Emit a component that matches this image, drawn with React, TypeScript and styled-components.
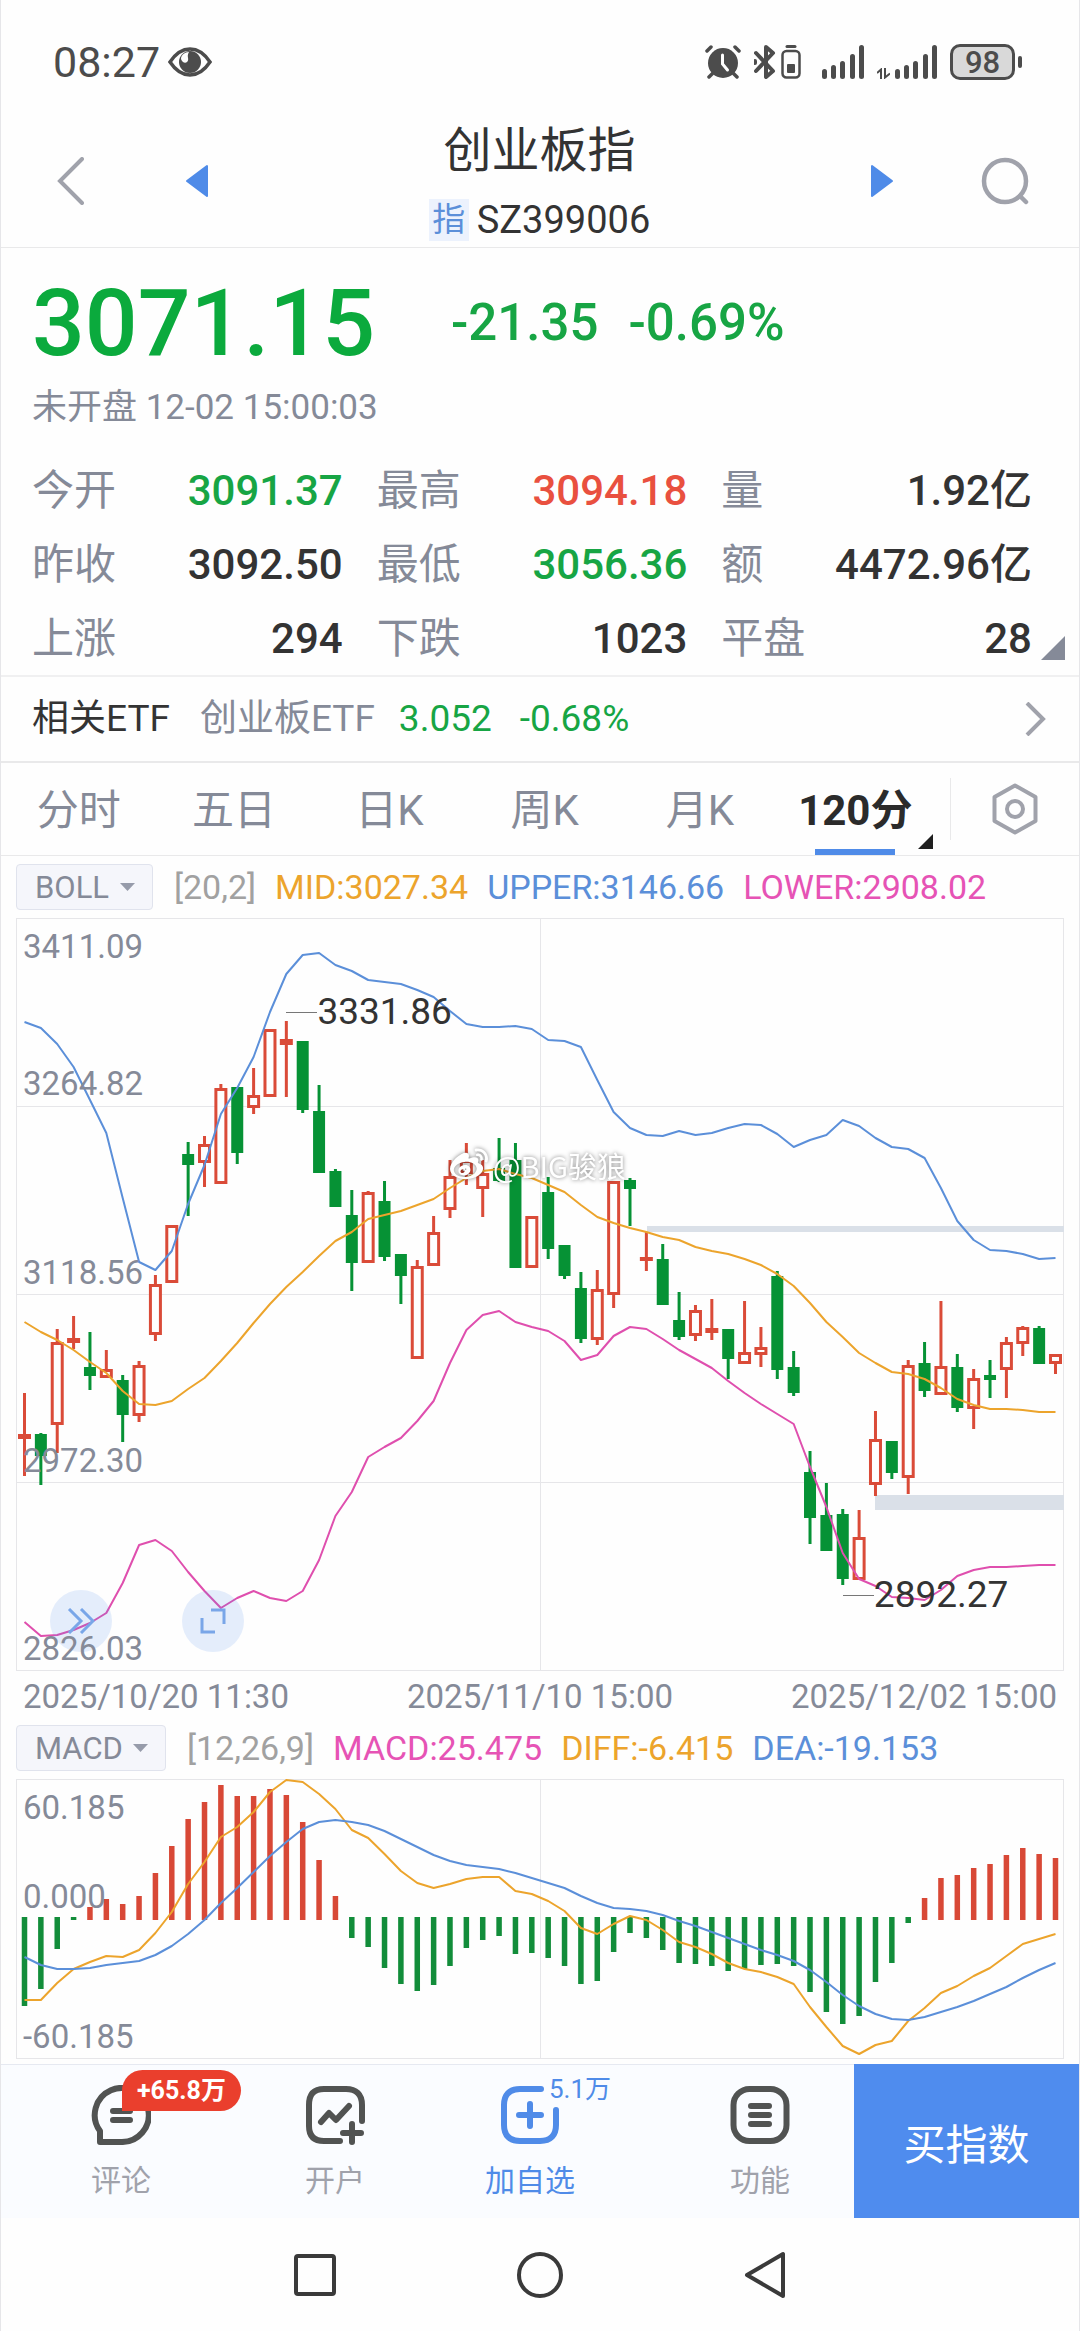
import React from "react";
import styled, { createGlobalStyle, css } from "styled-components";
import { FaWeibo } from "react-icons/fa";

const color = {
  ink: "#333333",
  muted: "#858a98",
  faint: "#a0a2ab",
  line: "#e9e9ea",
  grid: "#e6e6e9",
  blue: "#4f8be8",
  lineBlue: "#5b8fd9",
  up: "#e9503f",
  down: "#17a544",
  candleUp: "#da4b38",
  candleDown: "#069235",
  amber: "#eca42c",
  pink: "#e653b5",
};

const GlobalStyle = createGlobalStyle`
  * { box-sizing: border-box; }
  body {
    margin: 0;
    background: #fefefe;
    color: ${color.ink};
    font-family: Roboto, "Noto Sans CJK SC", sans-serif;
  }
  button, select { font: inherit; color: inherit; }
  svg { display: block; }
`;

const Screen = styled.div`
  border: 0 solid #e6e6e9;
  border-width: 0 1px;
`;

const plainButton = css`
  display: flex;
  align-items: center;
  justify-content: center;
  padding: 0;
  border: 0;
  background: none;
  white-space: nowrap;
  cursor: pointer;
`;

/* ---------- status bar ---------- */

const StatusBar = styled.div`
  display: flex;
  align-items: center;
  justify-content: space-between;
  height: 110px;
  padding: 14px 57px 0 52px;
  color: #4c4c4c;
`;

const Clock = styled.div`
  display: flex;
  align-items: center;
  gap: 8px;
  font-size: 43px;
  line-height: 50px;
`;

const StatusIcons = styled.div`
  display: flex;
  align-items: center;
  gap: 13px;
`;

const IconPair = styled.div<{ $after?: number }>`
  display: flex;
  align-items: flex-end;
  gap: 5px;
  margin-right: ${(p) => p.$after ?? 0}px;
`;

const Battery = styled.div`
  display: flex;
  align-items: center;
  gap: 3px;
  &::after {
    content: "";
    width: 4px;
    height: 12px;
    border-radius: 2px;
    background: #4c4c4c;
  }
`;

const BatteryLevel = styled.span`
  width: 65px;
  height: 36px;
  border: 3px solid #4c4c4c;
  border-radius: 10px;
  background: #d9d9d9;
  font-size: 31px;
  font-weight: 500;
  line-height: 31px;
  text-align: center;
`;

/* ---------- title bar ---------- */

const TitleBar = styled.header`
  display: flex;
  align-items: center;
  height: 138px;
  padding: 4px 50px 0 56px;
  border-bottom: 1px solid ${color.line};
`;

const IconButton = styled.button<{ $color: string }>`
  ${plainButton}
  color: ${(p) => p.$color};
`;

const SideControls = styled.div<{ $gap: number }>`
  display: flex;
  align-items: center;
  gap: ${(p) => p.$gap}px;
`;

const TitleBlock = styled.div`
  flex: 1;
  display: flex;
  flex-direction: column;
  align-items: center;
  gap: 17px;
`;

const Title = styled.h1`
  margin: 0;
  font-size: 48px;
  font-weight: 400;
  line-height: 62px;
`;

const Code = styled.div`
  display: flex;
  align-items: center;
  gap: 8px;
  font-size: 38px;
  line-height: 42px;
`;

const Tag = styled.span`
  width: 40px;
  background: #ecf2fd;
  color: ${color.lineBlue};
  font-size: 33px;
  text-align: center;
`;

/* ---------- quote ---------- */

const Quote = styled.section`
  position: relative;
  padding: 21px 47px 0 31px;
  border-bottom: 2px solid #f0f0f1;
`;

const PriceRow = styled.div`
  display: flex;
  align-items: center;
  color: ${color.down};
  font-weight: 500;
`;

const Price = styled.strong`
  font-size: 93px;
  font-weight: 500;
  line-height: 110px;
  color: #0baa3d;
`;

const Change = styled.span`
  display: flex;
  gap: 30px;
  margin-left: 76px;
  padding-bottom: 4px;
  font-size: 51px;
`;

const Stamp = styled.p`
  margin: 7px 0 23px;
  color: ${color.muted};
  font-size: 35px;
  line-height: 44px;
`;

const Stats = styled.dl`
  display: grid;
  grid-template-columns: repeat(3, 1fr);
  column-gap: 34px;
  margin: 0;
`;

const Stat = styled.div`
  display: flex;
  justify-content: space-between;
  height: 74px;
  font-size: 42px;
  line-height: 76px;
`;

const StatName = styled.dt`
  color: ${color.muted};
`;

const StatValue = styled.dd<{ $color?: string }>`
  margin: 0;
  font-weight: 500;
  color: ${(p) => p.$color ?? color.ink};
`;

const Corner = styled.span<{ $size: number; $color: string; $right: number; $bottom: number }>`
  position: absolute;
  right: ${(p) => p.$right}px;
  bottom: ${(p) => p.$bottom}px;
  width: ${(p) => p.$size}px;
  height: ${(p) => p.$size}px;
  background: ${(p) => p.$color};
  clip-path: polygon(100% 0, 100% 100%, 0 100%);
`;

/* ---------- related fund ---------- */

const Related = styled.a`
  display: flex;
  align-items: center;
  height: 86px;
  padding: 0 33px 0 31px;
  border-bottom: 2px solid ${color.line};
  color: ${color.ink};
  font-size: 37px;
  line-height: 42px;
  text-decoration: none;
  svg { margin-left: auto; color: ${color.faint}; }
`;

const RelatedItem = styled.span<{ $color: string; $gap: number }>`
  margin-left: ${(p) => p.$gap}px;
  color: ${(p) => p.$color};
`;

/* ---------- period tabs ---------- */

const TabBar = styled.nav`
  display: flex;
  align-items: center;
  height: 93px;
  border-bottom: 1px solid ${color.line};
`;

const Tabs = styled.div`
  flex: 1;
  display: grid;
  grid-template-columns: repeat(6, 1fr);
  height: 92px;
`;

const Tab = styled.button<{ $active?: boolean }>`
  ${plainButton}
  position: relative;
  padding-bottom: 5px;
  color: ${(p) => (p.$active ? "#2b2b2b" : color.muted)};
  font-size: 42px;
  font-weight: ${(p) => (p.$active ? 700 : 400)};
  ${(p) =>
    p.$active &&
    css`
      &::after {
        content: "";
        position: absolute;
        bottom: 0;
        left: 50%;
        width: 80px;
        height: 6px;
        margin-left: -40px;
        background: ${color.blue};
      }
    `}
`;

const TabSettings = styled.button`
  ${plainButton}
  width: 129px;
  height: 62px;
  margin-left: 17px;
  border-left: 1px solid ${color.line};
  color: ${color.faint};
`;

/* ---------- indicators and charts ---------- */

const IndicatorRow = styled.div`
  display: flex;
  align-items: center;
  gap: 19px;
  height: 62px;
  padding: 0 15px;
  font-size: 34px;
  white-space: nowrap;
`;

const Picker = styled.label`
  position: relative;
  margin-right: 2px;
  color: ${color.muted};
  svg {
    position: absolute;
    top: 19px;
    right: 18px;
    pointer-events: none;
  }
`;

const PickerSelect = styled.select`
  appearance: none;
  display: block;
  height: 46px;
  padding: 0 42px 0 18px;
  border: 1px solid #e0e3ed;
  border-radius: 4px;
  background: #f5f6fb;
  font-size: 31px;
`;

const Reading = styled.span<{ $color: string }>`
  color: ${(p) => p.$color};
`;

const Chart = styled.figure`
  position: relative;
  margin: 0 15px;
`;

const Plot = styled.svg<{ $height: number }>`
  width: 100%;
  height: ${(p) => p.$height}px;
`;

const Axis = styled.div`
  position: absolute;
  inset: 0;
  display: grid;
  grid-auto-rows: 1fr;
  color: ${color.muted};
  font-size: 33px;
  line-height: 38px;
  pointer-events: none;
`;

const AxisBand = styled.div`
  display: flex;
  flex-direction: column;
  justify-content: space-between;
  padding: 10px 7px 3px;
`;

const AxisLabel = styled.span`
  margin-top: auto;
  &:first-child:not(:only-child) { margin-top: 0; }
`;

const Callout = styled.span<{ $left: number; $top: number }>`
  position: absolute;
  left: ${(p) => p.$left}%;
  top: ${(p) => p.$top}px;
  display: flex;
  align-items: center;
  font-size: 37px;
  line-height: 44px;
  &::before {
    content: "";
    width: 31px;
    height: 1px;
    background: #777;
  }
`;

const Watermark = styled.span`
  position: absolute;
  left: 434px;
  top: 227px;
  display: flex;
  align-items: center;
  gap: 5px;
  color: #fff;
  font-family: "Noto Sans CJK SC", sans-serif;
  font-size: 29px;
  line-height: 40px;
  filter: drop-shadow(0 0 2px rgba(0, 0, 0, 0.5));
`;

const ChartTools = styled.div`
  position: absolute;
  left: 34px;
  bottom: 19px;
  display: flex;
  gap: 70px;
`;

const ToolButton = styled.button`
  ${plainButton}
  width: 62px;
  height: 62px;
  border-radius: 50%;
  background: rgba(79, 139, 232, 0.15);
  color: #79a6e8;
`;

const Dates = styled.div`
  display: flex;
  align-items: flex-end;
  justify-content: space-between;
  height: 46px;
  padding: 0 22px;
  color: ${color.muted};
  font-size: 33px;
  line-height: 40px;
`;

/* ---------- bottom bars ---------- */

const ActionBar = styled.div`
  display: flex;
  height: 154px;
  margin-top: 5px;
  border-top: 1px solid #e6e9f1;
  background: #fafcff;
`;

const Actions = styled.div`
  flex: 1;
  display: grid;
  grid-template-columns: 214fr 180fr 245fr 124fr;
  justify-items: start;
  padding: 20px 0 0 90px;
`;

const Action = styled.button<{ $accent?: boolean }>`
  ${plainButton}
  position: relative;
  flex-direction: column;
  justify-content: flex-start;
  gap: 18px;
  color: ${(p) => (p.$accent ? color.blue : color.faint)};
  font-size: 30px;
  line-height: 36px;
  svg { color: ${(p) => (p.$accent ? color.blue : "#515352")}; }
`;

const Badge = styled.span`
  position: absolute;
  left: 31px;
  top: -15px;
  padding: 0 15px;
  border-radius: 21px 21px 21px 0;
  background: #ea3f2d;
  color: #fff;
  font-size: 25px;
  font-weight: 700;
  line-height: 41px;
`;

const Counter = styled.span`
  position: absolute;
  left: 64px;
  top: -14px;
  font-size: 26px;
`;

const BuyButton = styled.button`
  ${plainButton}
  width: 225px;
  height: 154px;
  margin-top: -1px;
  background: #4f8cee;
  color: #fff;
  font-size: 42px;
`;

const SystemNav = styled.nav`
  display: flex;
  align-items: center;
  justify-content: center;
  gap: 177px;
  height: 113px;
`;

/* ---------- chart data, plotted on the chart's own pixel grid ---------- */

type Candle = [up: 0 | 1, high: number, top: number, bottom: number, low: number];

const candles: Candle[] = [
  [1, 1393, 1434, 1439, 1476], [0, 1433, 1434, 1456, 1485], [1, 1329, 1342, 1425, 1453], [1, 1316, 1338, 1343, 1349],
  [0, 1332, 1367, 1376, 1390], [1, 1350, 1369, 1378, 1378], [0, 1375, 1380, 1415, 1442], [1, 1361, 1365, 1416, 1422],
  [1, 1275, 1284, 1335, 1341], [1, 1225, 1225, 1283, 1283], [0, 1142, 1154, 1165, 1216], [1, 1136, 1144, 1163, 1187],
  [1, 1084, 1088, 1184, 1184], [0, 1087, 1087, 1153, 1164], [1, 1068, 1095, 1108, 1114], [1, 1029, 1029, 1097, 1097],
  [1, 1021, 1039, 1045, 1097], [0, 1041, 1041, 1110, 1113], [0, 1085, 1111, 1173, 1173], [0, 1169, 1171, 1207, 1207],
  [0, 1190, 1215, 1263, 1291], [1, 1191, 1192, 1263, 1263], [0, 1181, 1201, 1257, 1261], [0, 1254, 1254, 1276, 1304],
  [1, 1260, 1266, 1359, 1359], [1, 1216, 1232, 1266, 1266], [1, 1160, 1176, 1210, 1218], [1, 1143, 1160, 1174, 1185],
  [1, 1160, 1173, 1189, 1217], [0, 1138, 1168, 1181, 1182], [0, 1143, 1160, 1268, 1268], [1, 1216, 1216, 1268, 1268],
  [0, 1177, 1192, 1249, 1259], [0, 1245, 1245, 1276, 1279], [0, 1272, 1288, 1339, 1343], [1, 1270, 1289, 1340, 1345],
  [1, 1181, 1181, 1295, 1308], [0, 1178, 1180, 1189, 1226], [1, 1232, 1257, 1261, 1271], [0, 1244, 1259, 1305, 1305],
  [0, 1292, 1320, 1337, 1340], [1, 1305, 1310, 1336, 1341], [1, 1299, 1328, 1333, 1340], [0, 1329, 1329, 1359, 1379],
  [1, 1301, 1352, 1364, 1364], [1, 1327, 1347, 1355, 1367], [0, 1271, 1276, 1370, 1379], [0, 1351, 1367, 1393, 1396],
  [0, 1451, 1472, 1518, 1544], [0, 1483, 1515, 1551, 1551], [0, 1509, 1514, 1579, 1585], [1, 1510, 1537, 1580, 1580],
  [1, 1411, 1439, 1485, 1496], [0, 1441, 1441, 1473, 1479], [1, 1360, 1365, 1478, 1494], [0, 1342, 1363, 1391, 1397],
  [1, 1301, 1366, 1395, 1395], [0, 1354, 1367, 1408, 1412], [1, 1369, 1378, 1409, 1429], [0, 1360, 1375, 1380, 1398],
  [1, 1337, 1342, 1370, 1398], [1, 1326, 1327, 1344, 1356], [0, 1326, 1328, 1364, 1364], [1, 1354, 1354, 1364, 1374],
];

const upper = [
  1022, 1028, 1044, 1067, 1100, 1133, 1198, 1262, 1270, 1251, 1204, 1165, 1114, 1088, 1057, 1012,
  974, 955, 953, 965, 971, 980, 982, 984, 990, 997, 1011, 1024, 1027, 1027, 1026, 1029,
  1040, 1041, 1047, 1080, 1112, 1128, 1135, 1136, 1131, 1135, 1133, 1128, 1124, 1125, 1134, 1147,
  1140, 1135, 1120, 1126, 1138, 1147, 1149, 1158, 1188, 1221, 1240, 1250, 1251, 1254, 1259, 1258,
];

const mid = [
  1322, 1332, 1340, 1350, 1362, 1373, 1391, 1404, 1405, 1401, 1389, 1378, 1361, 1343, 1323, 1304,
  1287, 1272, 1256, 1241, 1232, 1219, 1215, 1211, 1205, 1199, 1188, 1178, 1171, 1169, 1174, 1178,
  1185, 1192, 1205, 1217, 1223, 1228, 1232, 1237, 1240, 1247, 1251, 1254, 1259, 1265, 1274, 1286,
  1303, 1322, 1337, 1353, 1363, 1372, 1374, 1379, 1388, 1399, 1405, 1409, 1409, 1410, 1412, 1412,
];

const lower = [
  1622, 1636, 1635, 1630, 1623, 1613, 1583, 1545, 1540, 1551, 1572, 1591, 1608, 1598, 1591, 1598,
  1601, 1591, 1560, 1516, 1492, 1457, 1447, 1438, 1421, 1401, 1363, 1330, 1315, 1311, 1322, 1327,
  1331, 1341, 1360, 1355, 1336, 1327, 1329, 1339, 1350, 1359, 1368, 1381, 1393, 1404, 1414, 1424,
  1467, 1507, 1553, 1579, 1586, 1597, 1598, 1600, 1590, 1576, 1570, 1567, 1567, 1566, 1565, 1565,
];

const macdBars = [
  2006, 1989, 1949, 1920, 1907, 1899, 1904, 1896, 1873, 1846, 1819, 1802, 1785, 1796, 1796, 1789,
  1795, 1822, 1860, 1896, 1938, 1947, 1968, 1984, 1991, 1985, 1966, 1948, 1940, 1936, 1954, 1953,
  1958, 1966, 1984, 1981, 1952, 1933, 1938, 1950, 1963, 1964, 1966, 1971, 1969, 1965, 1964, 1966,
  1992, 2012, 2024, 2016, 1982, 1963, 1923, 1898, 1878, 1875, 1868, 1864, 1855, 1848, 1854, 1858,
];

const diff = [
  2000, 2000, 1983, 1969, 1962, 1956, 1957, 1950, 1933, 1912, 1884, 1862, 1837, 1827, 1812, 1792,
  1780, 1782, 1794, 1809, 1830, 1838, 1854, 1871, 1883, 1888, 1884, 1879, 1877, 1877, 1891, 1894,
  1901, 1911, 1928, 1934, 1924, 1916, 1920, 1930, 1942, 1947, 1954, 1963, 1969, 1972, 1977, 1984,
  2007, 2027, 2046, 2054, 2045, 2041, 2021, 2008, 1993, 1986, 1976, 1968, 1956, 1944, 1939, 1934,
];

const dea = [
  1957, 1965, 1969, 1969, 1968, 1965, 1963, 1961, 1955, 1946, 1934, 1920, 1903, 1888, 1872, 1856,
  1842, 1829, 1822, 1820, 1822, 1825, 1831, 1839, 1847, 1855, 1861, 1865, 1867, 1869, 1873, 1878,
  1883, 1888, 1896, 1903, 1908, 1909, 1911, 1915, 1921, 1926, 1932, 1938, 1944, 1950, 1955, 1961,
  1970, 1982, 1995, 2006, 2014, 2019, 2020, 2017, 2012, 2007, 2001, 1994, 1987, 1978, 1970, 1963,
];

const xAt = (i: number) => 24.5 + i * 16.365;
const points = (ys: number[]) => ys.map((y, i) => `${xAt(i).toFixed(1)},${y}`).join(" ");

const Curve = ({ ys, stroke }: { ys: number[]; stroke: string }) => (
  <polyline points={points(ys)} fill="none" stroke={stroke} strokeWidth="2" strokeLinejoin="round" />
);

const CandleMark = ({ candle, index }: { candle: Candle; index: number }) => {
  const [up, high, top, bottom, low] = candle;
  const x = xAt(index);
  const tint = up ? color.candleUp : color.candleDown;
  return (
    <g stroke={tint} strokeWidth="3">
      <path d={`M${x} ${high}V${top}M${x} ${bottom}V${low}`} />
      {up ? (
        <rect x={x - 5} y={top + 1.5} width="10" height={Math.max(bottom - top - 3, 1)} fill="#fefefe" />
      ) : (
        <rect x={x - 6} y={top} width="12" height={bottom - top} fill={tint} stroke="none" />
      )}
    </g>
  );
};

const PriceChart = () => (
  <Chart aria-label="BOLL">
    <Plot $height={753} viewBox="16 918 1048 753" preserveAspectRatio="none">
      <path
        d="M16 918.5H1064M16 1106.5H1064M16 1294.5H1064M16 1482.5H1064M16 1670.5H1064M16.5 918V1671M540.5 918V1671M1063.5 918V1671"
        stroke={color.grid}
      />
      <rect x="647" y="1226" width="417" height="6" fill="#dae0e8" />
      <rect x="875" y="1495" width="189" height="15" fill="#dae0e8" />
      {candles.map((c, i) => (
        <CandleMark key={i} candle={c} index={i} />
      ))}
      <Curve ys={upper} stroke={color.lineBlue} />
      <Curve ys={mid} stroke={color.amber} />
      <Curve ys={lower} stroke="#df4fae" />
    </Plot>
    <ChartTools>
      <ToolButton aria-label="快进">
        <svg width="28" height="26" viewBox="0 0 28 26" fill="none" stroke="currentColor" strokeWidth="3">
          <path d="M2 1l12 12L2 25M14 1l12 12-12 12" />
        </svg>
      </ToolButton>
      <ToolButton aria-label="全屏">
        <svg width="26" height="26" viewBox="0 0 26 26" fill="none" stroke="currentColor" strokeWidth="3">
          <path d="M11 2h13v14M15 24H2V10" />
        </svg>
      </ToolButton>
    </ChartTools>
    <Axis>
      <AxisBand>
        <AxisLabel>3411.09</AxisLabel>
        <AxisLabel>3264.82</AxisLabel>
      </AxisBand>
      <AxisBand><AxisLabel>3118.56</AxisLabel></AxisBand>
      <AxisBand><AxisLabel>2972.30</AxisLabel></AxisBand>
      <AxisBand><AxisLabel>2826.03</AxisLabel></AxisBand>
    </Axis>
    <Callout $left={25.8} $top={72}>3331.86</Callout>
    <Callout $left={78.9} $top={655}>2892.27</Callout>
    <Watermark>
      <FaWeibo size={38} />
      @BIG骏狼
    </Watermark>
  </Chart>
);

const MacdChart = () => (
  <Chart aria-label="MACD">
    <Plot $height={280} viewBox="16 1779 1048 280" preserveAspectRatio="none">
      <path d="M16 1779.5H1064M16 2058.5H1064M16.5 1779V2059M540.5 1779V2059M1063.5 1779V2059" stroke={color.grid} />
      {macdBars.map((y, i) => {
        const up = y < 1917;
        return (
          <rect
            key={i}
            x={xAt(i) - 2.75}
            y={up ? y : 1917}
            width="5.5"
            height={up ? 1920 - y : y - 1917}
            fill={up ? "#d84836" : "#128d3a"}
          />
        );
      })}
      <Curve ys={diff} stroke={color.amber} />
      <Curve ys={dea} stroke={color.lineBlue} />
    </Plot>
    <Axis>
      <AxisBand>
        <AxisLabel>60.185</AxisLabel>
        <AxisLabel>0.000</AxisLabel>
      </AxisBand>
      <AxisBand><AxisLabel>-60.185</AxisLabel></AxisBand>
    </Axis>
  </Chart>
);

const IndicatorPicker = ({ name }: { name: string }) => (
  <Picker>
    <PickerSelect aria-label="指标" defaultValue={name}>
      <option>{name}</option>
    </PickerSelect>
    <svg width="15" height="8" viewBox="0 0 15 8" fill="#969baa">
      <path d="M0 0h15L7.500 8z" />
    </svg>
  </Picker>
);

const signalBars = [[0, 24], [9, 20], [18, 16], [28, 9], [37, 0]];

const Signal = () => (
  <svg width="42" height="34" viewBox="0 0 42 34" fill="currentColor">
    {signalBars.map(([x, y]) => (
      <rect key={x} x={x} y={y} width="5" height={34 - y} rx="2.500" />
    ))}
  </svg>
);

const stats: { name: string; value: string; tint?: string }[] = [
  { name: "今开", value: "3091.37", tint: color.down },
  { name: "最高", value: "3094.18", tint: color.up },
  { name: "量", value: "1.92亿" },
  { name: "昨收", value: "3092.50" },
  { name: "最低", value: "3056.36", tint: color.down },
  { name: "额", value: "4472.96亿" },
  { name: "上涨", value: "294" },
  { name: "下跌", value: "1023" },
  { name: "平盘", value: "28" },
];

const periods = ["分时", "五日", "日K", "周K", "月K"];

export default function App() {
  return (
    <Screen>
      <GlobalStyle />
      <StatusBar>
        <Clock>
          08:27
          <svg width="44" height="30" viewBox="0 0 44 30" fill="none">
            <path d="M2 15C8 6 14 2 22 2s14 4 20 13c-6 9-12 13-20 13S8 24 2 15z" stroke="currentColor" strokeWidth="3.500" />
            <circle cx="22" cy="15" r="11" fill="currentColor" />
            <path d="M21 5c-3 5 1 7-2 10-2 2-5 0-6-3 0-4 4-7 8-7z" fill="#fefefe" />
          </svg>
        </Clock>
        <StatusIcons>
          <svg width="36" height="34" viewBox="0 0 36 34" fill="none" stroke="currentColor" strokeLinecap="round">
            <circle cx="18" cy="18" r="15" fill="currentColor" stroke="none" />
            <path d="M2 6l4-4M34 6l-4-4M8 28l-4 4M28 28l4 4" strokeWidth="3.500" />
            <path d="M17.500 10v9l5 6" stroke="#fefefe" strokeWidth="3" />
          </svg>
          <IconPair $after={8}>
            <svg width="22" height="34" viewBox="0 0 22 34" fill="none" stroke="currentColor" strokeWidth="4" strokeLinejoin="round" strokeLinecap="round">
              <path d="M2 8l17 18-7 6V2l7 6L2 26M1 16v2" />
            </svg>
            <svg width="20" height="34" viewBox="0 0 20 34" fill="none">
              <path d="M6 1.500h8" stroke="currentColor" strokeWidth="3" strokeLinecap="round" />
              <rect x="1.500" y="6" width="17" height="26.500" rx="4" stroke="currentColor" strokeWidth="2.500" />
              <rect x="6" y="19" width="8" height="9" rx="1" fill="currentColor" />
            </svg>
          </IconPair>
          <Signal />
          <IconPair>
            <svg width="13" height="11" viewBox="0 0 13 11" fill="none" stroke="currentColor" strokeWidth="2">
              <path d="M0 5l4-3.500V11M8 0v9.500l5-4" />
            </svg>
            <Signal />
          </IconPair>
          <Battery>
            <BatteryLevel>98</BatteryLevel>
          </Battery>
        </StatusIcons>
      </StatusBar>

      <TitleBar>
        <SideControls $gap={101}>
          <IconButton $color={color.faint} aria-label="返回">
            <svg width="27" height="48" viewBox="0 0 27 48" fill="none" stroke="currentColor" strokeWidth="4" strokeLinecap="round">
              <path d="M25 2L3 24l22 22" />
            </svg>
          </IconButton>
          <IconButton $color={color.blue} aria-label="上一个">
            <svg width="23" height="34" viewBox="0 0 23 34" fill="currentColor" stroke="currentColor" strokeWidth="2" strokeLinejoin="round">
              <path d="M22 2v30L2 17z" />
            </svg>
          </IconButton>
        </SideControls>
        <TitleBlock>
          <Title>创业板指</Title>
          <Code>
            <Tag>指</Tag>SZ399006
          </Code>
        </TitleBlock>
        <SideControls $gap={87}>
          <IconButton $color={color.blue} aria-label="下一个">
            <svg width="23" height="34" viewBox="0 0 23 34" fill="currentColor" stroke="currentColor" strokeWidth="2" strokeLinejoin="round">
              <path d="M1 2v30l20-15z" />
            </svg>
          </IconButton>
          <IconButton $color={color.faint} aria-label="搜索">
            <svg width="48" height="48" viewBox="0 0 48 48" fill="none" stroke="currentColor" strokeWidth="4.500" strokeLinecap="round">
              <circle cx="24" cy="24" r="21" />
              <path d="M39 39l6 6" />
            </svg>
          </IconButton>
        </SideControls>
      </TitleBar>

      <Quote>
        <PriceRow>
          <Price>3071.15</Price>
          <Change>
            <span>-21.35</span>
            <span>-0.69%</span>
          </Change>
        </PriceRow>
        <Stamp>未开盘 12-02 15:00:03</Stamp>
        <Stats>
          {stats.map((s) => (
            <Stat key={s.name}>
              <StatName>{s.name}</StatName>
              <StatValue $color={s.tint}>{s.value}</StatValue>
            </Stat>
          ))}
        </Stats>
        <Corner $size={24} $color="#858a98" $right={14} $bottom={15} />
      </Quote>

      <Related href="#etf">
        相关ETF
        <RelatedItem $color={color.muted} $gap={30}>创业板ETF</RelatedItem>
        <RelatedItem $color={color.down} $gap={24}>3.052</RelatedItem>
        <RelatedItem $color={color.down} $gap={28}>-0.68%</RelatedItem>
        <svg width="21" height="34" viewBox="0 0 21 34" fill="none" stroke="currentColor" strokeWidth="4">
          <path d="M2 1l16 16L2 33" />
        </svg>
      </Related>

      <TabBar>
        <Tabs>
          {periods.map((p) => (
            <Tab key={p}>{p}</Tab>
          ))}
          <Tab $active>
            120分
            <Corner $size={15} $color="#1f1f1f" $right={0} $bottom={6} />
          </Tab>
        </Tabs>
        <TabSettings aria-label="设置">
          <svg width="46" height="52" viewBox="0 0 46 52" fill="none" stroke="currentColor" strokeWidth="4" strokeLinejoin="round">
            <path d="M23 2.500L43.500 14v24L23 49.500 2.500 38V14z" />
            <circle cx="23" cy="26" r="8" />
          </svg>
        </TabSettings>
      </TabBar>

      <IndicatorRow>
        <IndicatorPicker name="BOLL" />
        <Reading $color="#a1a1a1">[20,2]</Reading>
        <Reading $color={color.amber}>MID:3027.34</Reading>
        <Reading $color={color.lineBlue}>UPPER:3146.66</Reading>
        <Reading $color={color.pink}>LOWER:2908.02</Reading>
      </IndicatorRow>
      <PriceChart />
      <Dates>
        <span>2025/10/20 11:30</span>
        <span>2025/11/10 15:00</span>
        <span>2025/12/02 15:00</span>
      </Dates>
      <IndicatorRow>
        <IndicatorPicker name="MACD" />
        <Reading $color="#a1a1a1">[12,26,9]</Reading>
        <Reading $color={color.pink}>MACD:25.475</Reading>
        <Reading $color={color.amber}>DIFF:-6.415</Reading>
        <Reading $color={color.lineBlue}>DEA:-19.153</Reading>
      </IndicatorRow>
      <MacdChart />

      <ActionBar>
        <Actions>
          <Action>
            <svg width="60" height="60" viewBox="0 0 60 60" fill="none" stroke="currentColor" strokeWidth="6" strokeLinecap="round" strokeLinejoin="round">
              <path d="M9 57V46A27 27 0 1 1 30 57z" />
              <path d="M22 26h17M22 35h17" />
            </svg>
            评论
            <Badge>+65.8万</Badge>
          </Action>
          <Action>
            <svg width="60" height="60" viewBox="0 0 60 60" fill="none" stroke="currentColor" strokeWidth="6" strokeLinecap="round" strokeLinejoin="round">
              <path d="M57 36V20C57 9 51 4 41 4H19C9 4 4 9 4 20v21c0 10 5 15 15 15h16" />
              <path d="M16 37l8-9 7 7 13-14M47 39v18M38 48h18" />
            </svg>
            开户
          </Action>
          <Action $accent>
            <svg width="60" height="60" viewBox="0 0 60 60" fill="none" stroke="currentColor" strokeWidth="6" strokeLinecap="round" strokeLinejoin="round">
              <path d="M41 4H20C9 4 4 10 4 20v20c0 11 6 16 16 16h20c11 0 16-6 16-16V25" />
              <path d="M30 19v22M19 30h22" />
            </svg>
            加自选
            <Counter>5.1万</Counter>
          </Action>
          <Action>
            <svg width="60" height="60" viewBox="0 0 60 60" fill="none" stroke="currentColor" strokeWidth="6" strokeLinecap="round">
              <rect x="3.500" y="4" width="53" height="52" rx="16" />
              <path d="M21 21h18M21 30h18M21 39h18" />
            </svg>
            功能
          </Action>
        </Actions>
        <BuyButton>买指数</BuyButton>
      </ActionBar>

      <SystemNav>
        <IconButton $color="#3a3a3a" aria-label="最近任务">
          <svg width="48" height="48" viewBox="0 0 48 48" fill="none" stroke="currentColor" strokeWidth="4">
            <rect x="5" y="5" width="38" height="38" rx="2" />
          </svg>
        </IconButton>
        <IconButton $color="#3a3a3a" aria-label="主页">
          <svg width="48" height="48" viewBox="0 0 48 48" fill="none" stroke="currentColor" strokeWidth="4">
            <circle cx="24" cy="24" r="21" />
          </svg>
        </IconButton>
        <IconButton $color="#3a3a3a" aria-label="后退">
          <svg width="48" height="48" viewBox="0 0 48 48" fill="none" stroke="currentColor" strokeWidth="4" strokeLinejoin="round">
            <path d="M42 3v42L6 24z" />
          </svg>
        </IconButton>
      </SystemNav>
    </Screen>
  );
}
